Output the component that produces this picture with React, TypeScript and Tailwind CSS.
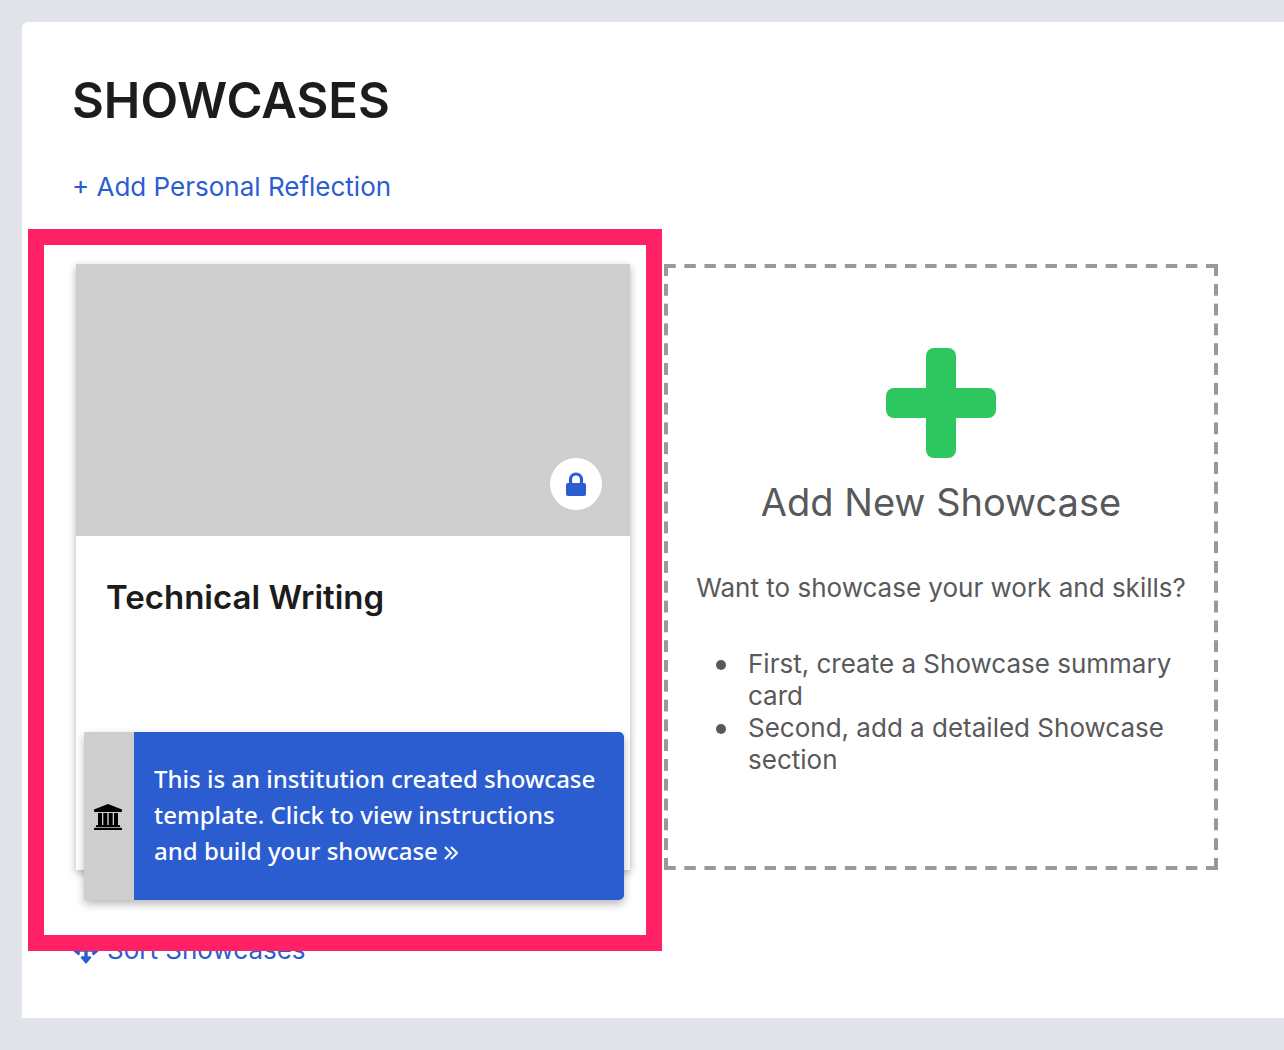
function LockIcon() {
  return (
    <svg viewBox="0 0 20 24" className="h-6 w-5" aria-hidden="true">
      <path d="M4.500 12V7.500a5.500 5.500 0 0 1 11 0V12" fill="none" stroke="currentColor" strokeWidth="3.200" />
      <rect x="0" y="11" width="20" height="13" rx="2" fill="currentColor" />
    </svg>
  );
}

function PlusIcon() {
  return (
    <svg viewBox="0 0 110 110" className="size-[110px]" fill="#2ec65f" aria-hidden="true">
      <rect x="40" y="0" width="30" height="110" rx="8" />
      <rect x="0" y="40" width="110" height="30" rx="8" />
    </svg>
  );
}

function InstitutionIcon() {
  return (
    <svg viewBox="0 0 28 26" className="h-[26px] w-7" fill="currentColor" aria-hidden="true">
      <path d="M14 0 28 5.500v1.800c0 .4-.4.7-.9.7H.9C.4 8 0 7.700 0 7.300V5.500z" />
      <path d="M4 9h4v12h1.300V9h4v12h1.400V9h4v12H20V9h4v12h1.100c.5 0 .9.400.9.900V23H2v-1.100c0-.5.400-.9.900-.9H4z" />
      <path d="M.9 23.800h26.200c.5 0 .9.400.9.900V26H0v-1.300c0-.5.400-.9.900-.9z" />
    </svg>
  );
}

function MoveIcon() {
  return (
    <svg viewBox="0 0 28 28" className="size-7" fill="currentColor" aria-hidden="true">
      <path d="M12.300 5.500h3.400v17h-3.400z M5.500 12.300h17v3.400h-17z" />
      <path d="M14 0l5.500 6.500-1.200 1.300H9.700L8.500 6.500z M14 28l-5.500-6.500 1.200-1.300h8.600l1.200 1.300z M0 14l6.500-5.500 1.300 1.200v8.600l-1.300 1.200z M28 14l-6.500 5.500-1.300-1.200V9.700l1.300-1.200z" />
    </svg>
  );
}

function TemplateCallout() {
  return (
    <button
      type="button"
      className="absolute right-[6px] -bottom-[30px] left-2 flex overflow-hidden rounded-r-[5px] text-left font-['Noto_Sans',sans-serif] text-2xl leading-9 font-medium text-white shadow-[0_4px_8px_rgba(0,0,0,0.28)]"
    >
      <span className="flex w-[50px] shrink-0 items-center justify-center self-stretch bg-[#cecece] pt-[2px] pr-[2px] text-black">
        <InstitutionIcon />
      </span>
      <span className="flex-1 bg-[#2b5dd1] pt-[29px] pr-[22px] pb-[31px] pl-5">
        This is an institution created showcase template. Click to view instructions and build your
        showcase{" "}
        <svg viewBox="0 0 14 14" className="inline size-[14px] align-baseline" fill="none" stroke="currentColor" strokeWidth="2" aria-hidden="true">
          <path d="M1 1l6 6-6 6M7 1l6 6-6 6" />
        </svg>
      </span>
    </button>
  );
}

function ShowcaseCard() {
  return (
    <article className="relative flex min-h-[606px] flex-col bg-white shadow-[0_3px_8px_rgba(0,0,0,0.3)]">
      <div className="flex h-[272px] items-end justify-end bg-[#cecece] px-7 py-[26px]">
        <button
          type="button"
          aria-label="Private showcase"
          className="flex size-[52px] items-center justify-center rounded-full bg-white text-[#2b5dd1]"
        >
          <LockIcon />
        </button>
      </div>
      <h2 className="px-[30px] pt-[39px] text-[33px] leading-[44px] font-semibold">Technical Writing</h2>
      <TemplateCallout />
      <div className="pointer-events-none absolute -top-[35px] -right-8 -bottom-[81px] -left-12 z-10 border-[16px] border-[#ff2066]" />
    </article>
  );
}

const steps = ["First, create a Showcase summary card", "Second, add a detailed Showcase section"];

function AddShowcaseCard() {
  return (
    <button
      type="button"
      className="flex min-h-[606px] flex-col items-center border-[6px] border-transparent bg-origin-padding px-[26px] pt-[78px] text-left text-[26px] leading-8 text-[#58595b] [background-image:linear-gradient(90deg,#999_30%,transparent_30%_70%,#999_70%),linear-gradient(90deg,#999_30%,transparent_30%_70%,#999_70%),linear-gradient(#999_30%,transparent_30%_70%,#999_70%),linear-gradient(#999_30%,transparent_30%_70%,#999_70%)] [background-position:0_-6px,0_calc(100%_+_6px),-6px_0,calc(100%_+_6px)_0] [background-repeat:round_no-repeat,round_no-repeat,no-repeat_round,no-repeat_round] [background-size:20px_4px,20px_4px,4px_20px,4px_20px]"
    >
      <PlusIcon />
      <span className="mt-5 text-[38px] leading-[48px]">Add New Showcase</span>
      <span className="mt-[46px]">Want to showcase your work and skills?</span>
      <ul className="mt-11 self-stretch pl-5">
        {steps.map((step) => (
          <li key={step} className="flex gap-[22px]">
            <span className="mt-3 size-[10px] shrink-0 rounded-full bg-[#58595b]" />
            <span>{step}</span>
          </li>
        ))}
      </ul>
    </button>
  );
}

export default function App() {
  return (
    <div className="min-h-screen bg-[#e0e4e9] pt-[22px] pb-8 pl-[22px] font-[Inter,sans-serif] text-[#1c1c1c]">
      <main className="rounded-tl-[6px] bg-white pt-[49px] pr-[66px] pb-[52px] pl-[50px]">
        <h1 className="text-[49px] leading-[60px] font-semibold">SHOWCASES</h1>
        <a href="#reflection" className="mt-10 block w-fit text-[26px] leading-8 text-[#2b5dd1]">
          + Add Personal Reflection
        </a>
        <section className="mt-[61px] ml-1 grid grid-cols-2 gap-[34px]">
          <ShowcaseCard />
          <AddShowcaseCard />
        </section>
        <a href="#sort" className="mt-16 flex w-fit items-center gap-[7px] text-[26px] leading-8 text-[#2b5dd1]">
          <MoveIcon />
          Sort Showcases
        </a>
      </main>
    </div>
  );
}
